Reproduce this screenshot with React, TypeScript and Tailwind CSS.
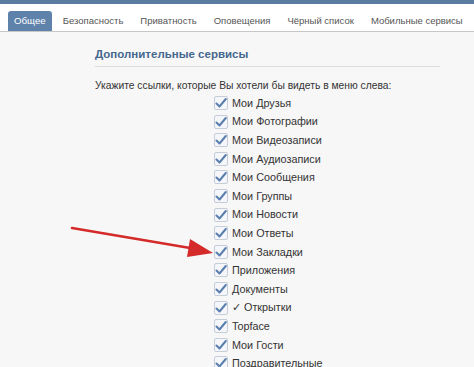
import React from "react";

const tabs = ["Общее", "Безопасность", "Приватность", "Оповещения", "Чёрный список", "Мобильные сервисы", "Б"];
const items = [
  "Мои Друзья",
  "Мои Фотографии",
  "Мои Видеозаписи",
  "Мои Аудиозаписи",
  "Мои Сообщения",
  "Мои Группы",
  "Мои Новости",
  "Мои Ответы",
  "Мои Закладки",
  "Приложения",
  "Документы",
  "✓ Открытки",
  "Topface",
  "Мои Гости",
  "Поздравительные",
];

function Check() {
  return (
    <span className="w-[14px] h-[14px] border border-[#c5cdd8] bg-[#f4f6f9] rounded-[2px] flex items-center justify-center shrink-0">
      <svg width="12" height="12" viewBox="0 0 12 12">
        <path d="M1.5 6.5 L4.5 9.5 L10.8 2" fill="none" stroke="#5a7fae" strokeWidth="2" strokeLinecap="round" strokeLinejoin="round" />
      </svg>
    </span>
  );
}

export default function App() {
  return (
    <div className="w-[474px] h-[367px] overflow-hidden bg-[#f7f7f7] relative" style={{ fontFamily: '"Liberation Sans", Arial, sans-serif' }}>
      <div className="h-[4px] bg-[#5b7ba1]" />
      <div className="h-[28px] bg-white border-b border-[#c7c7c7] flex items-end pl-[8px] whitespace-nowrap overflow-hidden">
        {tabs.map((t, i) => (
          <div
            key={t}
            className={
              i === 0
                ? "h-[20px] px-[6px] mr-[3px] rounded-t-[3px] bg-[#5e82aa] text-white text-[9.7px] flex items-center"
                : "h-[20px] px-[8px] mr-[1px] text-[#555] text-[9.5px] flex items-center"
            }
          >
            {t}
          </div>
        ))}
      </div>
      <div className="pl-[95px] pt-[14px]">
        <div className="text-[11.5px] font-bold text-[#45688e] pb-[3px] border-b border-[#dcdcdc] w-[345px]">Дополнительные сервисы</div>
        <div className="text-[10.3px] text-[#333] mt-[11px]">Укажите ссылки, которые Вы хотели бы видеть в меню слева:</div>
        <div className="pl-[119px] mt-[0px] flex flex-col">
          {items.map((it) => (
            <div key={it} className="h-[18.6px] flex items-center gap-[4px] text-[10.8px] text-[#333]">
              <Check />
              <span>{it}</span>
            </div>
          ))}
        </div>
      </div>
      <svg className="absolute left-0 top-0" width="474" height="367" viewBox="0 0 474 367">
        <line x1="72" y1="228" x2="196" y2="249" stroke="#d42a2a" strokeWidth="2.5" strokeLinecap="round" />
        <polygon points="213,253 190,239 187,257" fill="#d42a2a" />
      </svg>
    </div>
  );
}
